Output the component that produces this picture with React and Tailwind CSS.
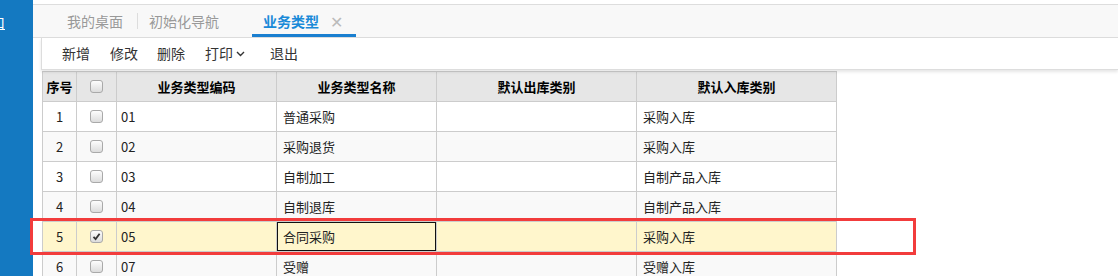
import React from "react";

const rows = [
  { no: 1, code: "01", name: "普通采购", out: "", inn: "采购入库" },
  { no: 2, code: "02", name: "采购退货", out: "", inn: "采购入库" },
  { no: 3, code: "03", name: "自制加工", out: "", inn: "自制产品入库" },
  { no: 4, code: "04", name: "自制退库", out: "", inn: "自制产品入库" },
  { no: 5, code: "05", name: "合同采购", out: "", inn: "采购入库", sel: true },
  { no: 6, code: "07", name: "受赠", out: "", inn: "受赠入库" },
];

function Checkbox({ checked }) {
  return (
    <div className="w-[13px] h-[13px] rounded-[3px] border border-[#a9a9a9] bg-gradient-to-b from-[#fdfdfd] to-[#dcdcdc] flex items-center justify-center">
      {checked && (
        <svg width="9" height="9" viewBox="0 0 9 9">
          <path d="M1.5 4.8 L3.6 7 L7.6 1.8" fill="none" stroke="#333" strokeWidth="1.8" />
        </svg>
      )}
    </div>
  );
}

export default function App() {
  const font = { fontFamily: '"Noto Sans CJK SC", "Liberation Sans", sans-serif' };
  return (
    <div className="relative flex w-[1118px] h-[276px] overflow-hidden bg-white" style={font}>
      <div className="w-[33px] shrink-0 bg-[#1479c1] overflow-hidden">
        <div className="mt-[14px] -ml-[9px] text-white text-[14px] leading-[16px] underline">口</div>
      </div>
      <div className="flex-1 flex flex-col overflow-hidden">
        <div className="shrink-0 mt-[4px] h-[34px] border-t border-b border-[#dddddd] bg-[#f8f8f8] flex items-stretch pl-[34px] text-[14px]">
          <div className="flex items-center pr-[14px] text-[#999999]">我的桌面</div>
          <div className="flex items-center"><div className="w-px h-[16px] bg-[#dddddd]"></div></div>
          <div className="flex items-center pl-[11px] pr-[33px] text-[#999999]">初始化导航</div>
          <div className="flex items-center pl-[11px] pr-[13px] border-b-[3px] border-[#1a7fd0] pt-[3px] text-[#1a8ad8] font-bold">
            <span>业务类型</span>
            <span className="ml-[11px] text-[#bbbbbb] font-normal text-[16px] leading-none">✕</span>
          </div>
        </div>
        <div className="shrink-0 flex">
          <div className="w-[8px] shrink-0"></div>
          <div className="flex-1 flex flex-col">
            <div className="shrink-0 relative z-10 h-[32px] border-l border-b border-[#dddddd] bg-white flex items-center pl-[20px] text-[14px] text-[#333333] shadow-[0_2px_3px_rgba(0,0,0,0.10)]">
              <span>新增</span>
              <span className="ml-[20px]">修改</span>
              <span className="ml-[19px]">删除</span>
              <span className="ml-[20px]">打印</span>
              <svg className="ml-[3px]" width="9" height="6" viewBox="0 0 9 6">
                <path d="M1 1 L4.5 4.5 L8 1" fill="none" stroke="#333" strokeWidth="1.4" />
              </svg>
              <span className="ml-[25px]">退出</span>
            </div>
            <div className="shrink-0 mt-[1px] ml-[1px] w-[795px] border-l border-t border-[#cccccc] text-[13px] text-[#222222]">
              <div className="grid grid-cols-[34px_40px_160px_160px_200px_200px] bg-[#e6e6e6] font-bold text-black">
                <div className="h-[30px] border-r border-b border-[#cccccc] flex items-center justify-center">序号</div>
                <div className="h-[30px] border-r border-b border-[#cccccc] flex items-center justify-center"><Checkbox /></div>
                <div className="h-[30px] border-r border-b border-[#cccccc] flex items-center justify-center">业务类型编码</div>
                <div className="h-[30px] border-r border-b border-[#cccccc] flex items-center justify-center">业务类型名称</div>
                <div className="h-[30px] border-r border-b border-[#cccccc] flex items-center justify-center">默认出库类别</div>
                <div className="h-[30px] border-r border-b border-[#cccccc] flex items-center justify-center">默认入库类别</div>
              </div>
              {rows.map((r, i) => {
                const bg = r.sel ? "bg-[#fff6cc]" : i % 2 === 1 ? "bg-[#f9f9f9]" : "bg-white";
                return (
                  <div key={r.no} className={`grid grid-cols-[34px_40px_160px_160px_200px_200px] ${bg}`}>
                    <div className="h-[30px] border-r border-b border-[#cccccc] flex items-center justify-center">{r.no}</div>
                    <div className="h-[30px] border-r border-b border-[#cccccc] flex items-center justify-center"><Checkbox checked={r.sel} /></div>
                    <div className="h-[30px] border-r border-b border-[#cccccc] flex items-center pl-[4px]">{r.code}</div>
                    <div className="h-[30px] border-r border-b border-[#cccccc]">
                      {r.sel ? (
                        <div className="h-full border border-[#111111] flex items-center pl-[5px]">{r.name}</div>
                      ) : (
                        <div className="h-full flex items-center pl-[6px]">{r.name}</div>
                      )}
                    </div>
                    <div className="h-[30px] border-r border-b border-[#cccccc] flex items-center pl-[6px]">{r.out}</div>
                    <div className="h-[30px] border-r border-b border-[#cccccc] flex items-center pl-[6px]">{r.inn}</div>
                  </div>
                );
              })}
            </div>
          </div>
        </div>
      </div>
      <div className="absolute left-[30px] top-[218px] w-[886px] h-[37px] border-[3px] border-[#f23c3c] pointer-events-none"></div>
    </div>
  );
}
